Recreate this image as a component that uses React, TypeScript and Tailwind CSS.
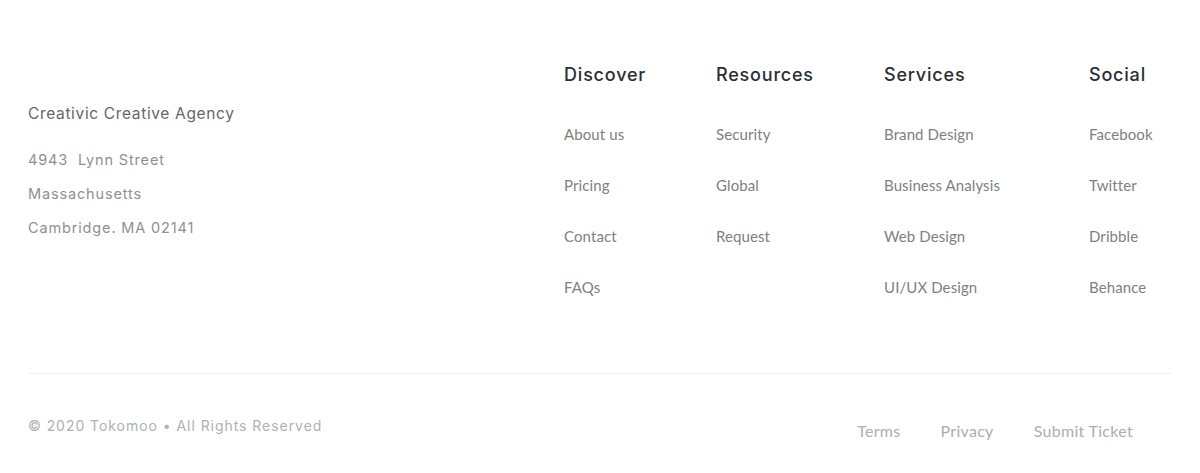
import React from "react";

const cols = [
  { title: "Discover", w: "w-[152px]", links: ["About us", "Pricing", "Contact", "FAQs"] },
  { title: "Resources", w: "w-[168px]", links: ["Security", "Global", "Request"] },
  { title: "Services", w: "w-[205px]", links: ["Brand Design", "Business Analysis", "Web Design", "UI/UX Design"] },
  { title: "Social", w: "w-[80px]", links: ["Facebook", "Twitter", "Dribble", "Behance"] },
];

export default function App() {
  return (
    <div className="w-[1200px] h-[473px] bg-white px-[28px] overflow-hidden">
      <div className="flex h-[374px] border-b border-[#eeeeee]">
        <div className="w-[536px] pt-[102px]" style={{ fontFamily: "Inter, 'Noto Sans', sans-serif" }}>
          <div className="text-[15.5px] leading-[24px] text-[#666] tracking-[0.65px]">Creativic Creative Agency</div>
          <div className="mt-[22px] flex flex-col gap-[10px] text-[14.5px] leading-[24px] text-[#909090] tracking-[0.85px]">
            <div>4943&nbsp; Lynn Street</div>
            <div>Massachusetts</div>
            <div>Cambridge. MA 02141</div>
          </div>
        </div>
        {cols.map((c) => (
          <div key={c.title} className={`${c.w} pt-[62px]`}>
            <div
              className="text-[18px] leading-[26px] font-medium text-[#2a2e33] tracking-[0.8px]"
              style={{ fontFamily: "Inter, 'Noto Sans', sans-serif" }}
            >
              {c.title}
            </div>
            <div
              className="mt-[35px] flex flex-col gap-[29px] text-[15px] leading-[22px] text-[#808080] tracking-[0.1px]"
              style={{ fontFamily: "Lato, 'Open Sans', sans-serif" }}
            >
              {c.links.map((l) => (
                <div key={l} className="whitespace-nowrap">{l}</div>
              ))}
            </div>
          </div>
        ))}
      </div>
      <div className="flex items-start">
        <div
          className="mt-[41px] text-[14px] leading-[22px] text-[#b0b0b0] tracking-[0.95px]"
          style={{ fontFamily: "Inter, 'Noto Sans', sans-serif" }}
        >
          © 2020 Tokomoo • All Rights Reserved
        </div>
        <div
          className="ml-auto mr-[39px] mt-[46px] flex gap-[40px] text-[16px] leading-[22px] text-[#adadad] tracking-[0.3px]"
          style={{ fontFamily: "Lato, 'Open Sans', sans-serif" }}
        >
          <span>Terms</span>
          <span>Privacy</span>
          <span>Submit Ticket</span>
        </div>
      </div>
    </div>
  );
}
